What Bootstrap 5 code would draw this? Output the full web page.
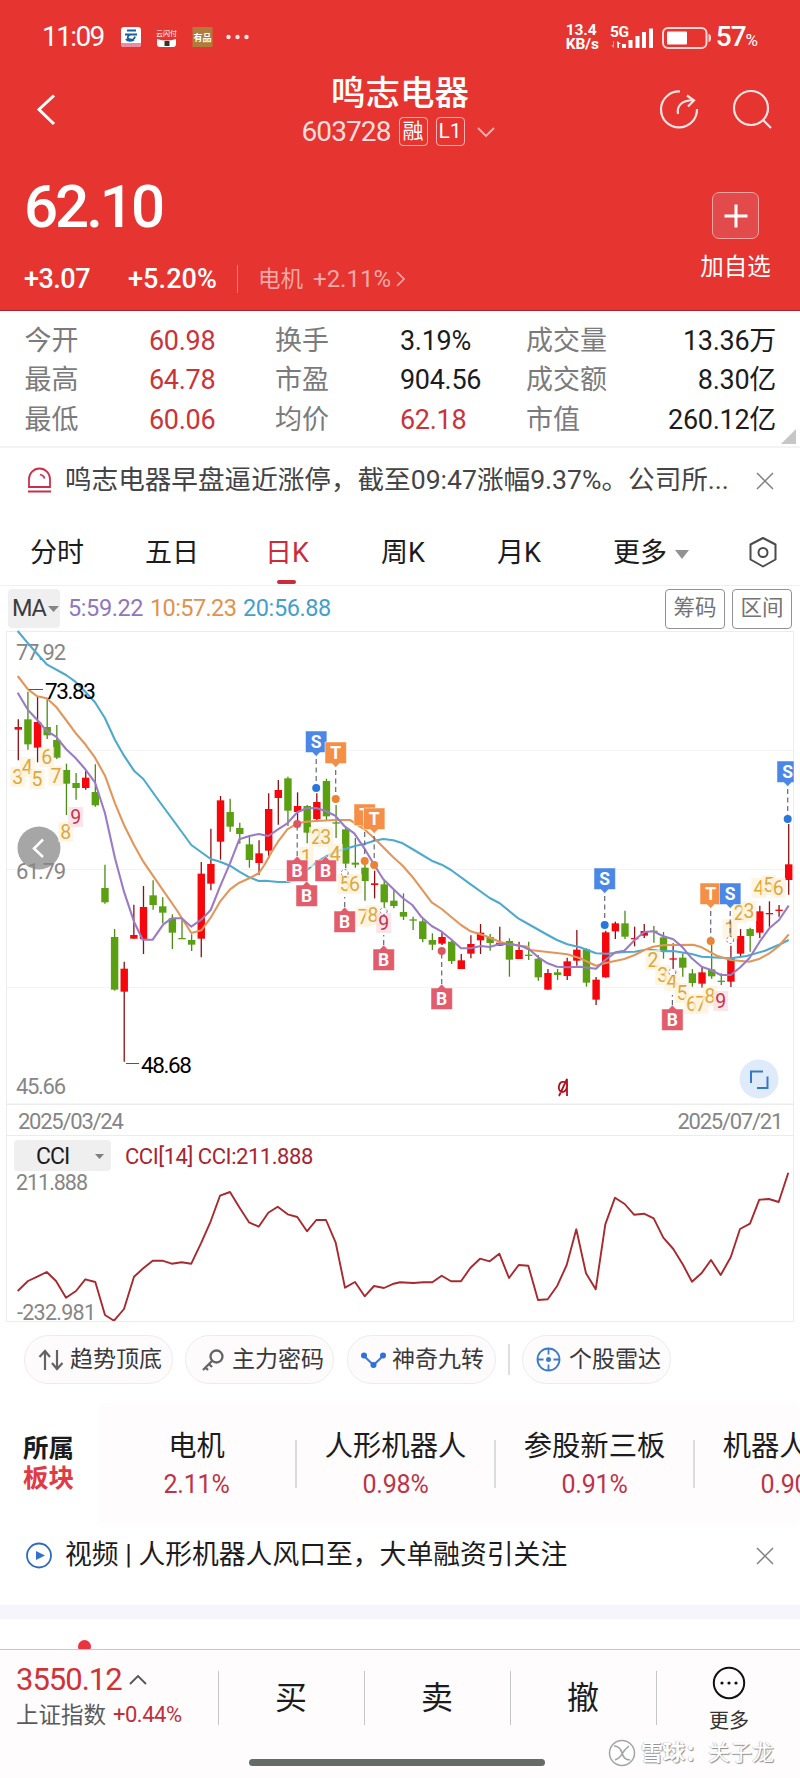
<!DOCTYPE html>
<html lang="zh-CN">
<head>
<meta charset="utf-8">
<meta name="viewport" content="width=device-width, initial-scale=1">
<title>鸣志电器 603728</title>
<link href="https://cdn.jsdelivr.net/npm/bootstrap@5.3.0/dist/css/bootstrap.min.css" rel="stylesheet">
<style>
:root{--up:#c9343a;--ink:#1c1c1e;--mute:#7b7b7d}
body{width:800px;height:1778px;overflow:hidden;background:#fff;color:var(--ink);font-family:Roboto,"Noto Sans CJK SC",sans-serif;font-size:27px;line-height:1;white-space:nowrap}
svg{display:block;flex:none}
.up{color:var(--up)}
.quote-head{height:311px;background:#e63431;border-bottom:1px solid #a9222b;color:#fff}
.status{height:56px;padding:18px 42px 0 42px}
.clock{font-size:28px;letter-spacing:-1.6px;width:79px}
.net{font-size:15.5px;line-height:14px;font-weight:700;letter-spacing:-.1px;width:43px}
.batt{font-size:28px;font-weight:500;letter-spacing:-1px}
.titlebar{height:102px;display:grid;grid-template-columns:200px 1fr 200px}
.stock-name{font-size:34.5px;font-weight:500;line-height:40px;margin-top:17px}
.code{font-size:28px;letter-spacing:-.9px;color:#fbdedd}
.tag{width:29px;height:29px;border:1px solid #f6b3b1;border-radius:4px;font-size:21px;display:flex;align-items:center;justify-content:center}
.price{font-size:60px;font-weight:500;letter-spacing:-3px;line-height:60px;padding:19px 0 0 24px;height:96px}
.chg{height:50px;font-weight:500;font-size:27px}
.addbox{width:47px;height:47px;border:1px solid #f3a3a1;border-radius:7px;background:#e24a4b}
.stats{height:137px;padding:11px 24px 0 24.5px;border-bottom:2px solid #f3f3f4}
.stats>div{display:grid;grid-template-columns:124.5px 126px 125px 126px 100px 1fr;height:39.3px;align-items:center}
.stats span{color:var(--mute)}
.stats b{font-weight:400;letter-spacing:-.3px}
.alertrow{height:67px;padding:0 26px 2px 26px}
.tabs{height:71px;border-bottom:1px solid #f0f0f1;display:grid;grid-template-columns:115px 120px 116px 116px 116px 141px 1fr;padding-left:30px;padding-top:7px;align-items:center}
.tabs .on{position:relative}
.tabs .on::after{content:"";position:absolute;left:12px;bottom:-17px;width:19px;height:4px;border-radius:2px;background:#cc2b3c}
.tools{height:44px;font-size:23.5px;padding:1px 8px 0}
.pick{background:#efeff0;border-radius:4px}
.tool{border:1px solid #929294;border-radius:4px;width:60px;height:40px;color:#737375;font-size:21.5px;padding:0}
.dates{margin:0 6px;height:31px;border:1px solid #ececed;border-width:0 1px 1px;color:#858587;font-size:22px;padding:3px 11px 0;letter-spacing:-1.25px}
.ccibox{margin:0 6px;height:186px;border:1px solid #ececed;border-width:0 1px 1px}
.chips{height:80px;padding:13px 24px 0;font-size:23px}
.chip{width:149px;height:49px;border:1px solid #ececef;border-radius:25px;background:#fefbfc;color:#39393b;padding-left:13px;display:flex;align-items:center}
.sectors{height:123px;padding-top:1px}
.sector{width:199px;height:48px;border-right:2px solid #dcdcde;flex:none;text-align:center}
.sector div:first-child{font-size:28.3px;line-height:36px;margin-top:-11px}
.sector div+div{font-size:25px;line-height:40px;color:#bd3448;letter-spacing:-.2px}
.videorow{height:80px;padding:0 26px 19px 26px;font-size:26.8px}
.gapband{height:14px;background:#f6f5fd}
.peek{height:30px;overflow:hidden}
.peek i{display:block;width:13px;height:13px;border-radius:50%;background:#ea3540;margin:21px 0 0 78px}
.dock{height:129px;border-top:1px solid #c7c7ca;background:#fefcfd;position:relative}
.dock .cell{width:146px;height:54px;border-left:1px solid #c6c6c9;display:flex;align-items:center;justify-content:center;font-size:32px;flex:none}
.homebar{position:absolute;left:249px;top:109px;width:296px;height:7px;border-radius:4px;background:#656b66}
.wm{position:absolute;left:608px;top:89px;color:#fff;font-size:22px;text-shadow:1px 1px 1px #8b8b8d,-.5px -.5px 1px #b5b5b8}
svg text{font-family:Roboto,"Noto Sans CJK SC",sans-serif}
</style>
</head>
<body>
<header class="quote-head">
  <div class="status d-flex align-items-center">
    <span class="clock">11:09</span>
    <svg width="130" height="24" viewBox="121 25 130 24">
      <rect x="121" y="27" width="20" height="20" rx="3" fill="#fff"/><path d="M121 43h20v1q0 3-3 3h-14q-3 0-3-3z" fill="#e98ba1"/>
      <path d="M127 30.500h9M125 34.500h12M131 34.500q-4 1-3 4q6 3 7-2M134 40q-6 2-8-1" stroke="#17609d" stroke-width="1.800" fill="none"/>
      <text x="166.500" y="36" font-size="7" fill="#fff" text-anchor="middle">云闪付</text><path d="M157 39q9.500 3 19 0v5q0 3-3 3h-13q-3 0-3-3z" fill="#fff"/><rect x="164.500" y="41" width="5" height="5" fill="#333"/>
      <rect x="192.500" y="27" width="20" height="20" fill="#b07c3c"/><text x="202.500" y="40.500" font-size="9" font-weight="700" fill="#fff" text-anchor="middle">有品</text>
      <g fill="#ffe9e8"><circle cx="228.500" cy="37" r="2.200"/><circle cx="237.500" cy="37" r="2.200"/><circle cx="246.500" cy="37" r="2.200"/></g>
    </svg>
    <div class="net ms-auto"><div>13.4</div><div>KB/s</div></div>
    <svg width="103" height="27" viewBox="607 23 103 27">
      <text x="608" y="36" font-size="15.500" font-weight="700" fill="#fff" letter-spacing="-.3">5G</text>
      <g fill="#fff"><path d="M615 40l4 3h-2v4h-1.500z"/><path d="M612 47v-7h-1v4h-2z" opacity=".5"/><rect x="620" y="43" width="4" height="4"/><rect x="626.500" y="39" width="4" height="8"/><rect x="633.500" y="35" width="4" height="12"/><rect x="640" y="31" width="4" height="16"/><rect x="647" y="27.500" width="4" height="19.500"/></g>
      <rect x="661" y="27" width="43.500" height="20" rx="5" fill="none" stroke="#fdd8d7" stroke-width="2"/><rect x="665" y="30.500" width="20" height="13" rx="1" fill="#fff"/><path d="M706.500 33q2.500 0 2.500 4t-2.500 4z" fill="#fdd8d7"/>
    </svg>
    <span class="batt" style="margin:0 1px 0 4px">57<small class="fw-normal" style="font-size:17px">%</small></span>
  </div>
  <div class="titlebar">
    <svg width="30" height="40" class="ms-4 mt-4" viewBox="24 80 30 40" overflow="visible"><path d="M54 82.500L39 96.500L54 111" transform="translate(0 13)" fill="none" stroke="#fff" stroke-width="3"/></svg>
    <div class="text-center">
      <div class="stock-name">鸣志电器</div>
      <div class="d-flex align-items-center justify-content-center" style="gap:8px;margin:4px 0 0 2px"><span class="code">603728</span><span class="tag">融</span><span class="tag">L1</span>
      <svg width="28" height="12"><path d="M5 2l8 8 8-8" fill="none" stroke="#f6b3b1" stroke-width="1.800"/></svg></div>
    </div>
    <svg width="200" height="90" viewBox="600 56 200 90"><g fill="none" stroke="#fde5e4" stroke-width="2.200"><path d="M680 91.500a18 18 0 1 0 17 17.500"/><path d="M678 114q-2-13 15-14M687 95.500l7 5-6 6"/><circle cx="751" cy="108" r="17"/><path d="M763 120l8 8"/></g></svg>
  </div>
  <div class="d-flex">
    <div class="flex-grow-1">
      <div class="price">62.10</div>
      <div class="chg d-flex align-items-center"><span style="width:104px;padding-left:24px;box-sizing:content-box;letter-spacing:-.5px">+3.07</span><span style="width:109px;letter-spacing:.1px">+5.20%</span>
        <span style="width:1px;height:28px;background:#ee7a78"></span>
        <span class="fw-normal" style="font-size:22.500px;color:#f5a9a7;padding-left:20px">电机</span><span class="fw-normal" style="font-size:24px;color:#f5a9a7;padding-left:10px">+2.11%</span>
        <svg width="16" height="18"><path d="M6 2l7 7-7 7" fill="none" stroke="#f5a9a7" stroke-width="1.700"/></svg></div>
    </div>
    <div class="text-center" style="width:129px;padding:34px 0 0">
      <div class="addbox mx-auto d-flex align-items-center justify-content-center"><svg width="24" height="24"><path d="M12 .5v23M.5 12h23" stroke="#fff" stroke-width="3"/></svg></div>
      <div style="font-size:23.500px;margin-top:17px">加自选</div>
    </div>
  </div>
</header>

<section class="stats">
  <div><span>今开</span><b class="up">60.98</b><span>换手</span><b>3.19%</b><span>成交量</span><b class="text-end">13.36万</b></div>
  <div><span>最高</span><b class="up">64.78</b><span>市盈</span><b>904.56</b><span>成交额</span><b class="text-end">8.30亿</b></div>
  <div class="position-relative"><span>最低</span><b class="up">60.06</b><span>均价</span><b class="up">62.18</b><span>市值</span><b class="text-end">260.12亿</b>
    <svg class="position-absolute" style="right:-20px;bottom:-4px" width="15" height="15"><path d="M15 0v15H0z" fill="#c6c6c8"/></svg></div>
</section>
<div class="alertrow d-flex align-items-center">
  <svg width="26" height="28" viewBox="26 466 26 28"><g fill="none" stroke="#c9304a" stroke-width="1.800"><path d="M29 486v-8a10.500 10.500 0 0 1 21 0v8zM28 490.500h23"/><path d="M40 473.500q4 1 4.500 4"/></g></svg>
  <span style="margin-left:13px;color:#444446;font-size:26.600px">鸣志电器早盘逼近涨停，截至09:47涨幅9.37%。公司所...</span>
  <svg class="ms-auto" width="18" height="18"><path d="M1 1l16 16M17 1L1 17" stroke="#808082" stroke-width="1.500"/></svg>
</div>
<nav class="tabs">
  <span>分时</span><span>五日</span><span class="on" style="color:#cc2b3c">日K</span><span>周K</span><span>月K</span>
  <span class="d-flex align-items-center">更多<svg width="24" height="10"><path d="M8 1h14l-7 9z" fill="#929294"/></svg></span>
  <svg width="30" height="32" viewBox="748 536 30 32" style="margin:-4px 0 0 -6px"><path d="M763 538l12.500 6.500v15L763 566.500l-12.500-7v-15z" fill="none" stroke="#4b4b4d" stroke-width="2" stroke-linejoin="round"/><circle cx="763" cy="552.500" r="4.500" fill="none" stroke="#4b4b4d" stroke-width="2"/></svg>
</nav>
<div class="tools d-flex align-items-center">
  <span class="pick d-flex align-items-center" style="width:52px;height:39px;padding-left:4px;color:#3c3c3e;letter-spacing:-1.200px;margin-right:8px">MA<svg width="14" height="8"><path d="M2 1h11l-5.500 6z" fill="#858587"/></svg></span>
  <span style="color:#8f77bd;width:82px;letter-spacing:-.4px">5:59.22</span><span style="color:#e0934f;width:93px;letter-spacing:-.6px">10:57.23</span><span style="color:#459fc9;letter-spacing:-.4px">20:56.88</span>
  <span class="tool btn ms-auto d-flex align-items-center justify-content-center">筹码</span><span class="tool btn d-flex align-items-center justify-content-center" style="margin-left:7px">区间</span>
</div>
<svg id="kline" width="800" height="475" viewBox="0 630 800 475">
  <g stroke="#ececed" stroke-width="1"><path d="M6.500 1105V631.500H793.500V1105" fill="none"/><path d="M7 750.500H793M7 869.500H793M7 987.500H793" stroke="#f3f3f4"/><path d="M7 1104.500H793" stroke-width="2"/></g>
  <circle cx="39" cy="848" r="21.500" fill="#a6a6a7"/><path d="M43 839.500L34 848.500L43 857" fill="none" stroke="#fff" stroke-width="2.500"/>
  <g font-size="22" fill="#868688"><text x="16" y="659.500" textLength="50">77.92</text><text x="16" y="879" textLength="50">61.79</text><text x="16" y="1093.500" textLength="50">45.66</text></g>
  <g id="candles"></g>
  <g id="averages" fill="none" stroke-width="2.100" stroke-linejoin="round"></g>
  <g stroke="#555" stroke-width="1"><path d="M29 689.500H43M126 1063.500H139"/></g>
  <g font-size="22.500" fill="#000"><text x="45" y="699" textLength="51">73.83</text><text x="141" y="1073" textLength="51">48.68</text></g>
  <g id="nines"></g><g id="signals"></g>
  <g fill="none" stroke="#b3111d" stroke-width="1.800"><path d="M559 1096l8-17v17M562 1092q-4-1-3-6t5-4q4 0 3 5t-5 5"/></g>
  <circle cx="759" cy="1079" r="19.500" fill="#dfeafb"/><path d="M751 1083v-11.500h12M757 1088h10.500v-11.500" fill="none" stroke="#3478c9" stroke-width="2"/>
</svg>
<div class="dates d-flex align-items-center justify-content-between"><span>2025/03/24</span><span>2025/07/21</span></div>
<section class="ccibox">
  <div class="d-flex align-items-center" style="padding:4px 0 0 7px;font-size:23px">
    <span class="pick d-flex align-items-center justify-content-between" style="width:97px;height:31px;padding:2px 5px 0 22px;letter-spacing:-1px">CCI<svg width="12" height="8"><path d="M1 1h9l-4.500 5z" fill="#7f7f81"/></svg></span>
    <span style="color:#a9242e;margin:2px 0 0 14px;font-size:22px;letter-spacing:-.45px">CCI[14] CCI:211.888</span>
  </div>
  <svg width="786" height="150" viewBox="7 1171 786 150"><g font-size="21.500" fill="#868688"><text x="16" y="1190" textLength="72">211.888</text><text x="17" y="1319.500" textLength="79">-232.981</text></g><polyline id="cci" fill="none" stroke="#a62a2f" stroke-width="1.900" stroke-linejoin="round"/></svg>
</section>
<div class="chips d-flex">
  <span class="chip"><svg width="26" height="22" viewBox="0 0 26 22"><g fill="none" stroke="#646466" stroke-width="2.200"><path d="M7 21V3M1.500 8L7 2l5 6M19 1v18M14 14l5 6 5.500-6"/></g></svg><span style="margin-left:6px">趋势顶底</span></span>
  <span class="chip" style="margin-left:12px"><svg width="28" height="24" viewBox="0 0 28 24"><g fill="none" stroke="#646466" stroke-width="2.300"><circle cx="17.500" cy="8.500" r="6"/><path d="M13 13L4 22M10 16l3 3M6 19l3 3"/></g></svg><span style="margin-left:5px">主力密码</span></span>
  <span class="chip" style="margin-left:13px"><svg width="25" height="18" viewBox="0 0 25 18"><path d="M3 5l9.500 9L22 5" fill="none" stroke="#3c78dc" stroke-width="2"/><g fill="#2f70dd"><circle cx="3" cy="4.500" r="3"/><circle cx="12.500" cy="14" r="3"/><circle cx="22" cy="4.500" r="3"/></g></svg><span style="margin-left:6px">神奇九转</span></span>
  <span style="width:2px;height:31px;margin:9px 12px 0;background:#dfdfe1"></span>
  <span class="chip"><svg width="25" height="25" viewBox="0 0 25 25"><g fill="none" stroke="#3b7cc9" stroke-width="1.800"><circle cx="12.500" cy="12.500" r="11"/><path d="M12.500 1v6.500M12.500 17.500v6.500M1 12.500h6.500M17.500 12.500H24"/></g><circle cx="12.500" cy="12.500" r="2.500" fill="#3b7cc9"/></svg><span style="margin-left:8px">个股雷达</span></span>
</div>
<section class="sectors d-flex">
  <div class="fw-bold flex-shrink-0" style="width:98px;padding:30px 0 0 23px;font-size:25.500px;line-height:30px">所属<div style="color:#e03a44">板块</div></div>
  <div class="d-flex flex-grow-1 overflow-hidden align-items-center rounded-3" style="background:#fefcfd;min-width:0">
    <div class="sector"><div>电机</div><div>2.11%</div></div><div class="sector"><div>人形机器人</div><div>0.98%</div></div><div class="sector"><div>参股新三板</div><div>0.91%</div></div><div class="sector"><div>机器人概念</div><div>0.90%</div></div>
  </div>
</section>
<div class="videorow d-flex align-items-center">
  <svg width="27" height="27" viewBox="0 0 27 27"><circle cx="13" cy="13.500" r="12" fill="none" stroke="#2f69bd" stroke-width="1.800"/><path d="M10 9l9 4.500-9 4.500z" fill="#2f70d2"/></svg>
  <span style="margin-left:12px">视频 | 人形机器人风口至，大单融资引关注</span>
  <svg class="ms-auto" width="18" height="18"><path d="M1 1l16 16M17 1L1 17" stroke="#808082" stroke-width="1.500"/></svg>
</div>
<div class="gapband"></div>
<div class="peek"><i></i></div>
<footer class="dock">
  <div class="d-flex" style="padding-top:21px">
    <div class="flex-shrink-0" style="width:217.500px;padding-left:16px;margin-top:-8px">
      <div class="d-flex align-items-center" style="font-size:31px;color:#cf3338;height:33px;letter-spacing:-1px">3550.12<svg width="26" height="12"><path d="M8 10l8-8 8 8" fill="none" stroke="#555" stroke-width="1.800"/></svg></div>
      <div class="d-flex align-items-center" style="height:38px;font-size:22.500px;color:#5a5a5c">上证指数<span style="color:#c02f3c;margin-left:7px;font-size:22px;letter-spacing:-.5px">+0.44%</span></div>
    </div>
    <div class="cell">买</div><div class="cell">卖</div><div class="cell">撤</div>
    <div class="cell flex-column" style="font-size:20px;color:#333"><svg width="34" height="34" viewBox="0 0 34 34"><circle cx="17" cy="17" r="15.200" fill="none" stroke="#111" stroke-width="2"/><g fill="#111"><circle cx="10" cy="17" r="1.600"/><circle cx="17" cy="17" r="1.600"/><circle cx="24" cy="17" r="1.600"/></g></svg><span style="margin-top:11px">更多</span></div>
  </div>
  <div class="homebar"></div>
  <div class="wm d-flex align-items-center"><svg width="28" height="28" viewBox="0 0 28 28"><circle cx="14" cy="14" r="12.500" fill="#fff" stroke="#a3a3a6" stroke-width="1.500"/><path d="M6 7q6 0 8 7t8 7M21 7q-5 4-7 8t-7 6" fill="none" stroke="#a3a3a6" stroke-width="1.600"/></svg><span class="fw-bold" style="margin-left:5px">雪球：</span><span style="margin-left:1px">关子龙</span></div>
</footer>
<script src="https://cdn.jsdelivr.net/npm/bootstrap@5.3.0/dist/js/bootstrap.bundle.min.js"></script>
<script>
// one bar per trading day: high, low, body top, body bottom; u = rise, d = fall. Blocks: [first y, bars]
const blocks=[[625,`283,406,306,314,u 200,374,283,358,d 215,412,291,368,u 222,342,306,331,d 300,402,345,398,d 416,570,435,476,d 444,524,474,489,d 436,494,458,489,u 418,545,501,541,d 719,836,789,832,d 912,1097,936,1094,d 1010,1310,1031,1100,u 839,941,930,941,u 783,987,846,942,u 766,854,811,840,d 817,895,844,863,d 868,972,880,923,d 880,942,939,941,d 928,978,945,959,d 711,997,746,941,u 611,796,717,776,u 513,704,526,650,u 521,620,561,605,d 593,656,609,627,d 630,728,658,705,d 646,750,685,714,u`],
[700,`280,475,327,452,u 240,374,270,294,u 230,378,235,332,d 277,372,318,336,u 315,430,318,398,d 280,362,306,357,u 236,360,243,349,d 315,414,367,371,d 383,505,388,491,d 414,503,488,494,d 495,602,503,543,d 512,595,550,555,u 540,622,553,607,d 567,625,602,618,d 580,660,636,650,d 650,690,658,662,d 655,727,664,717,d 700,750,720,734,d 695,735,711,731,u 722,792,725,783,d 762,807,781,807,u 706,775,732,761,u 672,762,698,721,u 702,752,711,729,d 680,738,728,737,u 715,830,723,779,d 725,777,750,777,u 725,780,764,768,d`],
[740,`645,722,656,712,d 687,749,699,749,u 687,720,697,705,d 653,720,664,708,u 570,677,629,662,u 625,740,628,728,d 711,795,719,779,u 572,713,577,712,u 545,597,550,574,u 512,597,550,590,d 560,619,594,597,u 552,594,573,587,u 558,608,572,575,d 576,656,592,633,d 610,690,655,658,u 640,710,653,683,d 687,740,700,729,d 682,743,697,731,u 615,716,688,709,d 700,735,722,725,d 617,741,655,725,u 567,652,588,641,u 563,635,567,588,d 497,594,514,578,u 484,560,519,522,u 495,530,509,513,u 252,464,373,420,u`]];
let k=0,bars='';
for(const [y0,t] of blocks)for(const s of t.split(' ')){
  const v=s.split(','),[h,l,a,b]=v.slice(0,4).map(n=>y0+n/3),x=18.3+k++*9.63,up=v[4]=='u';
  bars+=`<path d="M${x} ${h}V${l}" stroke="${up?'#8c0f14':'#4a8a16'}" stroke-width="1.3"/><rect x="${x-3.7}" y="${a}" width="7.4" height="${Math.max(b-a,1.3)}" fill="${up?'#f5070b':'#5b9f13'}"/>`;
}
candles.innerHTML=bars;
// line points in thirds of a pixel, each segment with its own origin
const pts=segs=>segs.map(([x0,y0,t])=>t.split(' ').map(p=>{const[a,b]=p.split(',');return (x0+a/3).toFixed(1)+','+(y0+b/3).toFixed(1)}).join(' ')).join(' ');
const ma={
'#4ea9cf':[[0,625,'53,18 84,55 110,85 140,118 198,150 226,170 256,200 285,232 315,280 345,345 372,392 402,437 430,462 475,525 530,600 574,660 632,702 660,710 690,722 718,740 748,757 776,768'],[265,700,'0,542 40,546 70,546 90,540 124,512 154,487 182,470 211,455 240,447 270,438 298,432 328,422 355,417 385,421 413,430 442,447 500,482 530,494 558,510 617,553 674,594 704,610 761,656'],[530,740,'0,555 53,585 81,600 112,613 150,622 198,640 230,641 283,636 314,635 343,630 370,630 398,634 430,633 485,642 515,650 543,652 602,655 650,648 705,632 747,614 776,600']],
'#e3965a':[[0,625,'53,153 84,193 112,214 140,220 168,245 198,285 226,323 256,358 285,398 315,452 345,535 372,600 402,660 430,710 485,790 530,855 574,924 604,916 632,878 660,830 690,793 718,773 748,760 776,745'],[265,700,'0,492 20,455 39,425 67,388 97,370 124,365 154,363 211,360 255,360 278,375 298,388 328,415 355,442 385,472 413,497 442,530 500,607 530,627 558,650 588,675 617,694 660,707 704,725 731,733 789,740'],[530,740,'0,630 53,636 112,643 150,655 198,677 230,668 283,657 314,645 343,630 370,620 398,616 430,615 490,614 515,622 560,647 602,660 658,665 689,656 718,640 747,618 776,583']],
'#9a7cc4':[[0,625,'53,203 84,255 112,285 140,318 168,335 198,372 226,398 256,433 285,472 315,565 345,700 372,800 402,890 428,944 458,944 490,898 515,880 545,880 574,905 604,884 632,855 660,785 690,715 718,643 748,633 776,627'],[265,700,'10,408 39,388 67,370 97,337 124,325 154,324 182,333 211,347 240,380 268,400 298,445 328,495 355,538 385,567 413,594 442,615 470,652 500,678 530,695 558,718 588,745 617,745 647,738 674,741 704,732 740,732 775,740'],[530,740,'0,630 25,652 53,670 81,680 112,682 150,680 198,686 226,660 256,637 283,632 314,600 343,576 370,574 398,588 430,598 456,620 485,655 515,680 543,690 572,705 602,705 631,682 658,655 689,605 718,565 747,540 776,497']]};
averages.innerHTML=Object.entries(ma).map(([c,s])=>`<polyline stroke="${c}" points="${pts(s)}"/>`).join('');
cci.setAttribute('points',pts([[0,1090,'53,603 84,573 112,560 140,546 168,573 198,623 228,603 256,568 286,576 315,675 342,692 372,657 402,560 430,535 458,512 487,512 515,521 545,517 574,521 604,458 632,394 660,317 690,306 718,352 747,397 776,410 805,368 833,350 863,373 892,381 921,424 949,390 978,390 1007,458 1035,593 1065,576 1094,619 1122,588 1152,594 1181,581'],[400,1090,'0,577 40,579 70,577 97,577 125,557 153,574 183,574 211,534 240,506 269,514 298,491 327,564 356,525 385,527 414,630 443,628 472,587 500,525 529,418 558,550 587,598 616,403 645,323 674,342 702,374 732,371 761,385 790,443 820,477 848,523 876,575 905,549 933,510 962,555 992,502 1020,417 1050,401 1078,329 1107,327 1136,336 1165,248']]));
// nine-turn count labels: digit, x, y (centre)
nines.innerHTML=[[3,17.7,777],[4,27.3,767],[5,37,779],[6,46.7,757],[7,56,776],[8,65.7,832],[9,75.7,817],[1,306.3,857],[2,316.5,837],[3,325.7,837],[4,335.3,854],[5,345,884],[6,354.5,884],[7,363.3,917],[8,373,915],[9,383.7,923],[2,653,960],[3,662.7,975],[4,672,981],[5,682,993],[6,691.5,1004],[7,701,1004],[8,710,996],[9,720.7,1001],[1,730,929],[2,739.3,913],[3,749,911],[4,759,888],[5,768.7,885],[6,778.3,888]].map(([n,x,y])=>`<rect x="${x-7.5}" y="${y-10}" width="15" height="20" fill="${n==9?'#fbdce2':'#fdf1dc'}" opacity=".75"/><text x="${x}" y="${y+7}" font-size="19.5" text-anchor="middle" fill="${n==9?'#c5344d':'#dca83d'}">${n}</text>`).join('');
// trade flags: letter, left, top, dot y (0 = none)
const col={S:'#4a87e6',T:'#f58f45',B:'#e35c6c'},dot={S:'#2878db',T:'#ea8332',B:'#dc5560'};
signals.innerHTML=[['S',305.5,731,788],['T',325,742,799],['T',354,804,861],['T',363.5,808,865],['B',286.5,860,824],['B',315,860,0],['B',296,885,0],['B',334,911,873],['B',373,949,911],['B',431,988,951],['S',594,868,925],['T',700,883,941],['S',719.5,883,940],['B',661.7,1009,972],['S',777,761,819]].map(([c,x,y,d],i)=>{
  const m=x+10.7,b=c=='B',ring=i==7||i==8||i==12||i==13;
  return (d?`<path d="M${m} ${b?y-4:y+28}V${b&&ring?y-14:d}" stroke="#63667d" stroke-width="1.2" stroke-dasharray="5 3.5"/>`+(ring?`<circle cx="${m}" cy="${d}" r="3.5" fill="#fff" stroke="#84718c" stroke-dasharray="2 2"/>`:`<circle cx="${m}" cy="${d}" r="4" fill="${dot[c]}"/>`):'')+
  `<path d="${b?`M${x} ${y}h7l3.7-4 3.700 4h7v21.500h-21.400z`:`M${x} ${y}h${x>770?17:21.4}v21.500h${x>770?-2.6:-7}l-3.700 4-3.700-4h-7z`}" fill="${col[c]}" stroke="#fff" stroke-width=".5"/><text x="${m}" y="${y+17}" font-size="17.5" font-weight="700" fill="#fff" text-anchor="middle">${c}</text>`}).join('');
</script>
</body>
</html>
